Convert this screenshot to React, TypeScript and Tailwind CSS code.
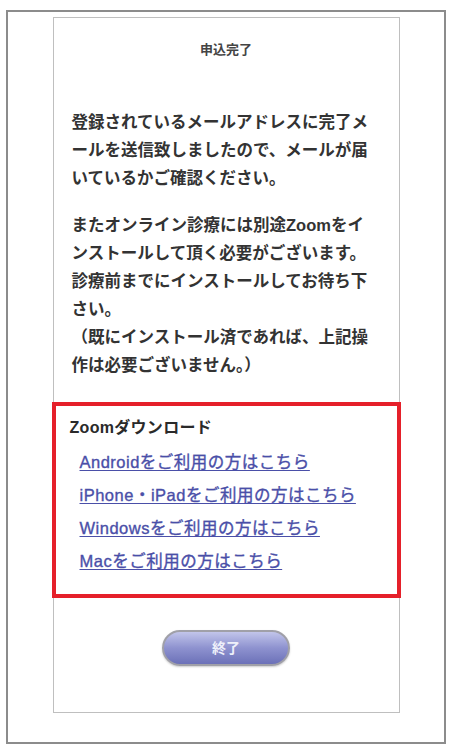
import React from "react";

const jp = { fontFamily: '"Liberation Sans", "Noto Sans CJK JP", sans-serif' };

const links = [
  "Androidをご利用の方はこちら",
  "iPhone・iPadをご利用の方はこちら",
  "Windowsをご利用の方はこちら",
  "Macをご利用の方はこちら",
];

export default function App() {
  return (
    <div className="w-[453px] h-[752px] bg-white pt-[10px] pl-[6px]" style={jp}>
      <div className="w-[440px] h-[734px] border-2 border-[#8c8c8c] pt-[5px]">
        <div className="mx-auto w-[347px] border border-[#bfbfbf] pt-[22px] pb-[46px]">
          <h1 className="text-center text-[13px] leading-[20px] font-bold text-[#444]">
            申込完了
          </h1>

          <p className="mt-[48px] pl-[18px] whitespace-nowrap text-[16.5px] leading-[28px] font-bold text-[#333]">
            登録されているメールアドレスに完了メ
            <br />
            ールを送信致しましたので、メールが届
            <br />
            いているかご確認ください。
          </p>

          <p className="mt-[19px] pl-[18px] whitespace-nowrap text-[16.5px] leading-[28px] font-bold text-[#333]">
            またオンライン診療には別途Zoomをイ
            <br />
            ンストールして頂く必要がございます。
            <br />
            診療前までにインストールしてお待ち下
            <br />
            さい。
            <br />
            （既にインストール済であれば、上記操
            <br />
            作は必要ございません。）
          </p>

          <div className="mt-[23px] -mx-[2px] border-4 border-[#e5202a] pt-[12px] pb-[23px] pl-[14px]">
            <div className="text-[16px] leading-[20px] font-bold text-[#2a2a2a] tracking-[0.3px]">
              Zoomダウンロード
            </div>
            <ul className="mt-[14px] flex flex-col gap-[13px] pl-[10px] text-[16.5px] leading-[20px] tracking-[0.5px]">
              {links.map((l) => (
                <li key={l} className="h-[20px]">
                  <a
                    href="#"
                    className="text-[#4a4fa8] underline underline-offset-2 decoration-1 [-webkit-text-stroke:0.35px_#4a4fa8]"
                  >
                    {l}
                  </a>
                </li>
              ))}
            </ul>
          </div>

          <div className="mt-[32px] flex justify-center">
            <button className="w-[128px] h-[36px] rounded-full border-2 border-[#a0a0a8] bg-gradient-to-b from-[#c2c5ea] via-[#8e92cf] to-[#6c71b8] text-[14px] font-bold text-[#eef0fa] shadow-[0_1px_2px_rgba(0,0,0,0.2)]">
              終了
            </button>
          </div>
        </div>
      </div>
    </div>
  );
}
